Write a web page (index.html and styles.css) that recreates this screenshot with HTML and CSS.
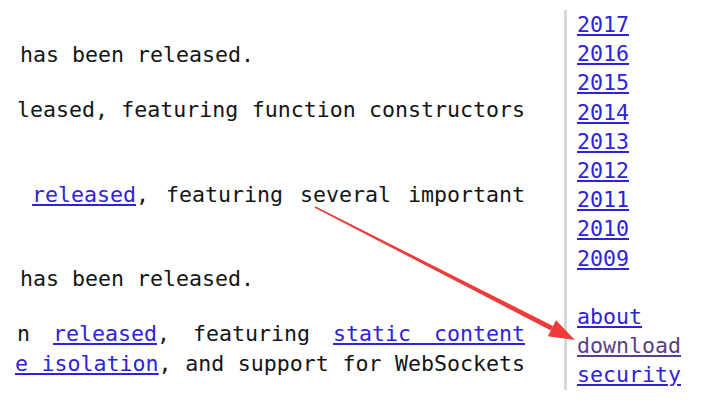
FILE: index.html
```html
<!DOCTYPE html>
<html>
<head>
<meta charset="utf-8">
<link rel="stylesheet" href="styles.css">
</head>
<body>
<div class="page">
  <main class="main">
    <p class="para">
      <span class="line">&nbsp;</span>
      <span class="line pad">has been released.</span>
    </p>
    <p class="para">
      <span class="line just pad-small">leased, featuring function constructors</span>
      <span class="line">&nbsp;</span>
    </p>
    <p class="para">
      <span class="line just pad-wide"><a href="#">released</a>, featuring several important</span>
      <span class="line">&nbsp;</span>
    </p>
    <p class="para">
      <span class="line pad">has been released.</span>
    </p>
    <p class="para">
      <span class="line just pad-small">n <a href="#">released</a>, featuring <a href="#">static content</a></span>
      <span class="line just"><a href="#">e isolation</a>, and support for WebSockets</span>
    </p>
  </main>
  <nav class="side">
    <a href="#">2017</a>
    <a href="#">2016</a>
    <a href="#">2015</a>
    <a href="#">2014</a>
    <a href="#">2013</a>
    <a href="#">2012</a>
    <a href="#">2011</a>
    <a href="#">2010</a>
    <a href="#">2009</a>
    <span class="gap">&nbsp;</span>
    <a href="#">about</a>
    <a href="#" class="visited">download</a>
    <a href="#">security</a>
  </nav>
</div>
<svg class="annot" width="725" height="405" viewBox="0 0 725 405">
  <polygon fill="#ee3b3b" points="315.3,206.3 553.0,326.0 550.8,330.4 314.7,207.7"/>
  <polygon fill="#ee3b3b" points="556.0,320.2 575,340 547.8,336.2"/>
</svg>
</body>
</html>
```
FILE: styles.css
```css
html, body {
  margin: 0;
  padding: 0;
  background: #ffffff;
  width: 725px;
  height: 405px;
  overflow: hidden;
}
body {
  position: relative;
  font-family: "DejaVu Sans Mono", "Liberation Mono", monospace;
  font-size: 21.6px;
  line-height: 29.2px;
  color: #151515;
}
a {
  color: #2f23d9;
  text-decoration: underline;
}
a.visited {
  color: #5b3f80;
}
.page {
  display: flex;
  align-items: flex-start;
  padding-top: 10px;
}
.main {
  width: 510px;
  margin-left: 15px;
  margin-top: 1px;
  flex: none;
}
.para {
  margin: 0 0 26px 0;
}
.line {
  display: block;
  white-space: pre-wrap;
}
.just {
  text-align: justify;
  text-align-last: justify;
}
.pad {
  padding-left: 5px;
}
.pad-small {
  padding-left: 2px;
}
.pad-wide {
  padding-left: 17px;
}
.side {
  margin-left: 39px;
  border-left: 3px solid #d9d9d9;
  padding-left: 10px;
  display: flex;
  flex-direction: column;
  align-items: flex-start;
  width: 120px;
}
.side a, .side .gap {
  display: block;
}
.annot {
  position: absolute;
  left: 0;
  top: 0;
  pointer-events: none;
}
```
